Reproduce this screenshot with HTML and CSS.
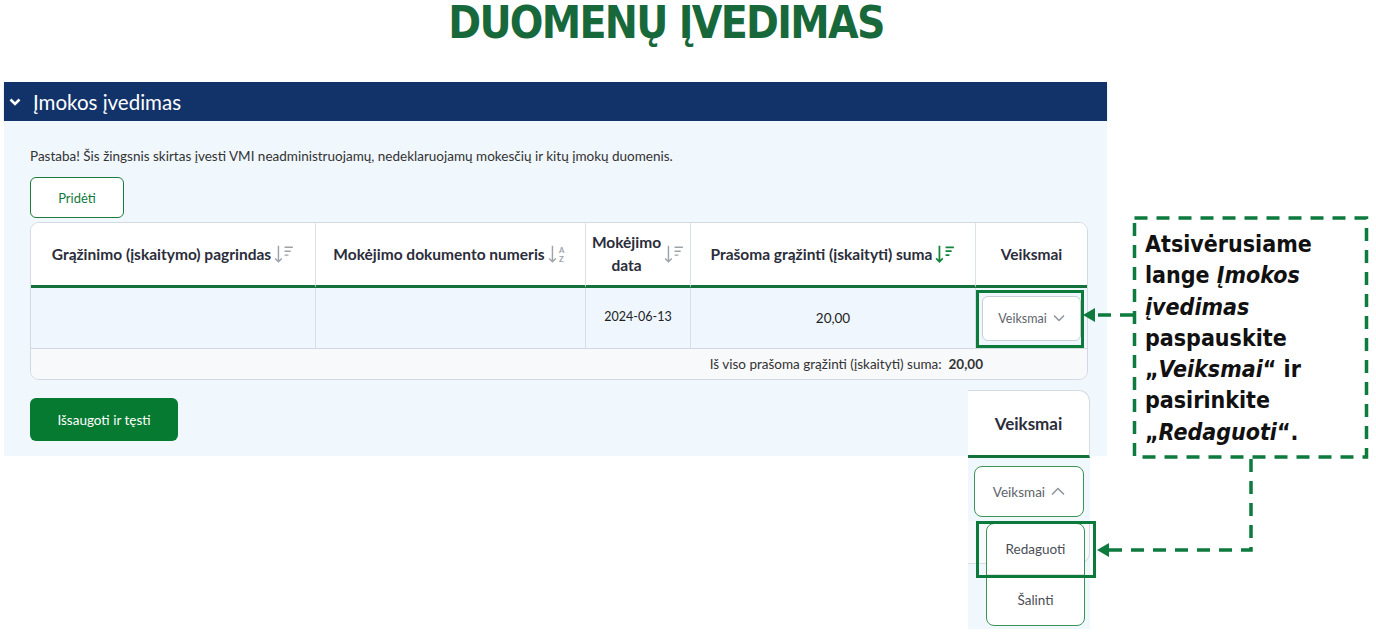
FILE: index.html
```html
<!DOCTYPE html>
<html lang="lt">
<head>
    <meta charset="UTF-8">
    <title>Duomenų įvedimas</title>
    <link rel="stylesheet" href="styles.css">
</head>
<body>
    <h1 class="title">DUOMENŲ ĮVEDIMAS</h1>

    <section class="panel">
        <div class="panel-head">
            <svg class="chev" width="12" height="10" viewBox="0 0 12 10"><path d="M1.5 2.5 L6 7 L10.5 2.5" fill="none" stroke="#fff" stroke-width="2.6"/></svg>
            <span>Įmokos įvedimas</span>
        </div>
        <div class="panel-body">
            <p class="note">Pastaba! Šis žingsnis skirtas įvesti VMI neadministruojamų, nedeklaruojamų mokesčių ir kitų įmokų duomenis.</p>
            <button class="btn-outline">Pridėti</button>

            <div class="grid">
                <div class="th">Grąžinimo (įskaitymo) pagrindas
                    <svg class="sort" width="20" height="20" viewBox="0 0 18 18"><path d="M4 1.5 V16 M1 13 L4 16 L7 13 M9.5 3 H17 M9.5 6.5 H15 M9.5 10 H13" fill="none" stroke="#9ea3aa" stroke-width="1.3"/></svg>
                </div>
                <div class="th">Mokėjimo dokumento numeris
                    <svg class="sort" width="20" height="20" viewBox="0 0 18 18"><path d="M4 1.5 V16 M1 13 L4 16 L7 13" fill="none" stroke="#9ea3aa" stroke-width="1.3"/><text x="10" y="8" font-size="7" fill="#9ea3aa" font-family="Lato">A</text><text x="10" y="16" font-size="7" fill="#9ea3aa" font-family="Lato">Z</text></svg>
                </div>
                <div class="th">Mokėjimo<br>data
                    <svg class="sort" width="20" height="20" viewBox="0 0 18 18"><path d="M4 1.5 V16 M1 13 L4 16 L7 13 M9.5 3 H17 M9.5 6.5 H15 M9.5 10 H13" fill="none" stroke="#9ea3aa" stroke-width="1.3"/></svg>
                </div>
                <div class="th">Prašoma grąžinti (įskaityti) suma
                    <svg class="sort" width="20" height="20" viewBox="0 0 18 18"><path d="M4 1.5 V16 M1 13 L4 16 L7 13 M9.5 3 H17 M9.5 6.5 H15 M9.5 10 H13" fill="none" stroke="#13843d" stroke-width="1.6"/></svg>
                </div>
                <div class="th last">Veiksmai</div>

                <div class="td"></div>
                <div class="td"></div>
                <div class="td date">2024-06-13</div>
                <div class="td sum">20,00</div>
                <div class="td last actions">
                    <button class="btn-menu">Veiksmai
                        <svg width="12" height="8" viewBox="0 0 12 8"><path d="M1 1.5 L6 6.5 L11 1.5" fill="none" stroke="#8a8f96" stroke-width="1.3"/></svg>
                    </button>
                    <span class="mark mark-row"></span>
                </div>

                <div class="tf">Iš viso prašoma grąžinti (įskaityti) suma:&nbsp; <b>20,00</b></div>
            </div>

            <button class="btn-primary">Išsaugoti ir tęsti</button>
        </div>
    </section>

    <div class="inset">
        <div class="inset-head">Veiksmai</div>
        <div class="inset-body">
            <div class="ghost"></div>
            <button class="btn-menu open">Veiksmai
                <svg width="14" height="9" viewBox="0 0 14 9"><path d="M1 7.5 L7 1.5 L13 7.5" fill="none" stroke="#8a8f96" stroke-width="1.4"/></svg>
            </button>
            <div class="menu">
                <div class="menu-item">Redaguoti</div>
                <div class="menu-item">Šalinti</div>
            </div>
            <span class="mark mark-menu"></span>
        </div>
    </div>

    <div class="callout">
        Atsivėrusiame lange <i>Įmokos įvedimas</i> paspauskite „<i>Veiksmai</i>“ ir pasirinkite „<i>Redaguoti</i>“.
    </div>

    <svg class="links" width="1376" height="632" viewBox="0 0 1376 632">
        <g fill="none" stroke="#0d7a3e" stroke-width="3.5" stroke-dasharray="13 9">
            <rect x="1134.5" y="218" width="232" height="239"/>
            <path d="M1133 315 H1094"/>
            <path d="M1251 459 V550 H1108"/>
        </g>
        <polygon points="1083,315 1095,308 1095,322" fill="#0d7a3e"/>
        <polygon points="1097,550 1109,543 1109,557" fill="#0d7a3e"/>
    </svg>
</body>
</html>
```

FILE: styles.css
```css
body {
    margin: 0;
    width: 1376px;
    height: 632px;
    position: relative;
    background: #fff;
    font-family: Lato, "Noto Sans", sans-serif;
    color: #2b2d3a;
    overflow: hidden;
}

.title {
    margin: 0;
    width: 1332px;
    height: 80px;
    box-sizing: border-box;
    text-align: center;
    font-family: "DejaVu Sans Condensed", "DejaVu Sans", sans-serif;
    font-stretch: condensed;
    font-weight: bold;
    font-size: 44px;
    line-height: 46px;
    letter-spacing: -1.7px;
    color: #17683a;
}

.panel {
    margin: 2px 0 0 4px;
    width: 1103px;
}

.panel-head {
    height: 39px;
    background: #12336a;
    color: #fff;
    display: flex;
    align-items: center;
    gap: 12px;
    padding-left: 5px;
    font-size: 20.5px;
    box-shadow: 0 2px 2px rgba(0, 0, 0, 0.18);
}

.panel-body {
    background: #f0f7fd;
    padding: 27px 20px 16px 26px;
    height: 335px;
    box-sizing: border-box;
}

.note {
    margin: 0 0 13px;
    font-size: 13.5px;
    color: #333;
}

.btn-outline {
    width: 94px;
    height: 41px;
    background: #fff;
    border: 1px solid #1d7a3c;
    border-radius: 6px;
    color: #11783a;
    font-family: inherit;
    font-size: 13px;
}

.grid {
    margin-top: 4px;
    width: 1056px;
    display: grid;
    grid-template-columns: 285px 270px 105px 285px 1fr;
    grid-template-rows: 65px 60px 31px;
    border: 1px solid #d3d9e0;
    border-radius: 9px;
    overflow: hidden;
    background: #fff;
}

.th {
    display: flex;
    align-items: center;
    justify-content: center;
    gap: 3px;
    text-align: center;
    font-weight: bold;
    font-size: 15.5px;
    line-height: 23px;
    border-right: 1px solid #dde2e8;
    border-bottom: 3px solid #13723a;
    background: #fff;
}

.td {
    border-right: 1px solid #d9dee4;
    background: #eff6fd;
    display: flex;
    align-items: center;
    justify-content: center;
    color: #222;
}

.last {
    border-right: none;
}

.date {
    font-size: 12.5px;
    padding-bottom: 4px;
}

.sum {
    font-size: 13.5px;
}

.actions {
    position: relative;
    justify-content: flex-start;
    padding-left: 6px;
}

.btn-menu {
    width: 99px;
    height: 45px;
    background: #fff;
    border: 1px solid #c9ced5;
    border-radius: 6px;
    font-family: inherit;
    font-size: 12.5px;
    color: #60646b;
    display: flex;
    align-items: center;
    justify-content: center;
    gap: 6px;
}

.tf {
    grid-column: 1 / -1;
    border-top: 1px solid #d3d9e0;
    background: #f8f9fb;
    text-align: right;
    padding-right: 104px;
    font-size: 13.5px;
    line-height: 30px;
    color: #333;
}

.btn-primary {
    margin-top: 18px;
    width: 148px;
    height: 43px;
    border: none;
    border-radius: 6px;
    background: #077a32;
    color: #fff;
    font-family: inherit;
    font-size: 13.5px;
}

.mark {
    position: absolute;
    border: 3px solid #0c7a3a;
    box-sizing: border-box;
}

.mark-row {
    left: 0;
    top: 2px;
    width: 108px;
    height: 58px;
}

/* zoomed dropdown picture */
.inset {
    position: absolute;
    left: 968px;
    top: 390px;
    width: 122px;
}

.inset-head {
    height: 68px;
    background: #fff;
    border-top: 1px solid #d5dbe2;
    border-right: 1px solid #d5dbe2;
    border-top-right-radius: 11px;
    border-bottom: 3px solid #13723a;
    box-sizing: border-box;
    display: flex;
    align-items: center;
    justify-content: center;
    font-weight: bold;
    font-size: 17px;
}

.inset-body {
    position: relative;
    height: 171px;
    background: #f0f7fd;
    padding: 8px 0 0 6px;
    box-sizing: border-box;
}

.ghost {
    position: absolute;
    left: 0;
    top: 63px;
    width: 121px;
    height: 42px;
    background: #f9fafb;
    border: 1px solid #d8dde3;
    border-left: none;
    border-top: none;
    border-bottom-right-radius: 11px;
}

.btn-menu.open {
    position: relative;
    width: 110px;
    height: 51px;
    border: 1.5px solid #3b9456;
    border-radius: 8px;
    font-size: 13.5px;
}

.menu {
    position: absolute;
    left: 18px;
    top: 65px;
    width: 99px;
    background: #fff;
    border: 1.5px solid #3b9456;
    border-radius: 8px;
    box-sizing: border-box;
}

.menu-item {
    height: 50px;
    display: flex;
    align-items: center;
    justify-content: center;
    font-size: 13.5px;
    color: #4a4e55;
}

.menu-item + .menu-item {
    border-top: 1px solid #dcdfe3;
}

.mark-menu {
    left: 8px;
    top: 63px;
    width: 120px;
    height: 57px;
}

.callout {
    position: absolute;
    left: 1145px;
    top: 229px;
    width: 218px;
    font-family: "DejaVu Sans Condensed", "DejaVu Sans", sans-serif;
    font-stretch: condensed;
    font-weight: bold;
    font-size: 23px;
    line-height: 31.3px;
    color: #111;
}

.links {
    position: absolute;
    left: 0;
    top: 0;
    pointer-events: none;
}
```
